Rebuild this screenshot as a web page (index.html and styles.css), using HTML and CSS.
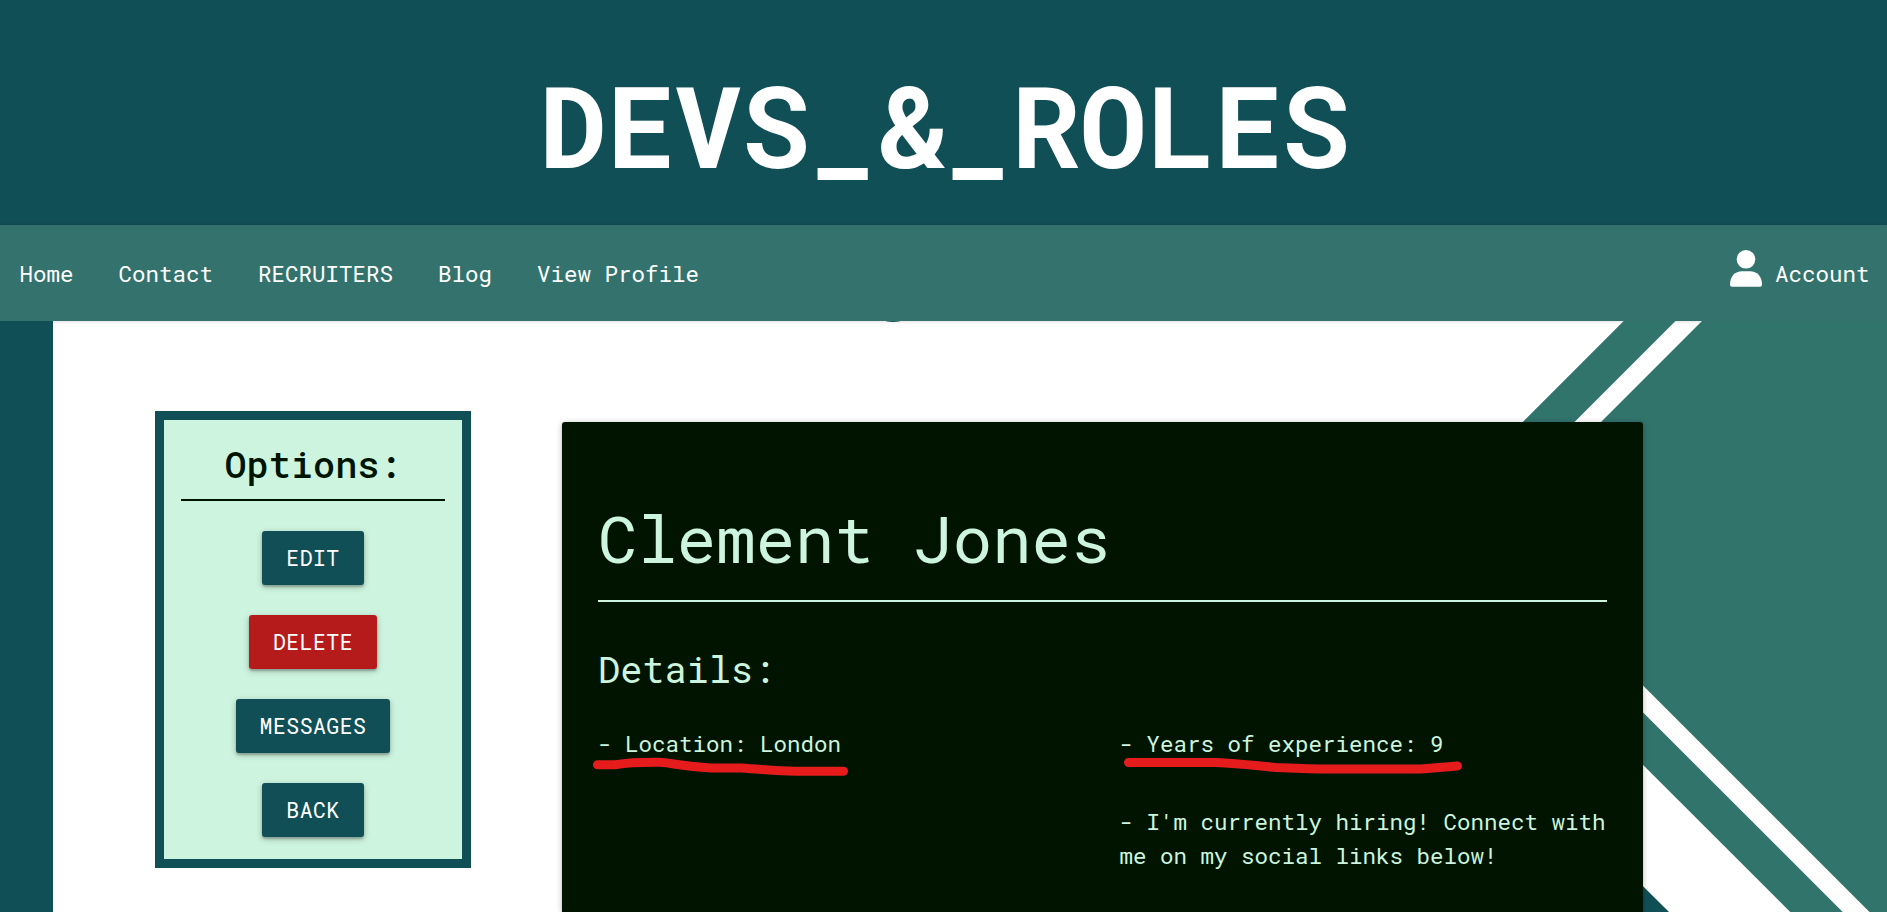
FILE: index.html
```html
<!DOCTYPE html>
<html lang="en">
<head>
<meta charset="utf-8">
<title>Devs & Roles</title>
<link rel="stylesheet" href="styles.css">
</head>
<body>
<header class="banner"><h1 class="brand">DEVS_&amp;_ROLES</h1></header>
<nav class="nav">
  <div class="links"><a>Home</a><a>Contact</a><a>RECRUITERS</a><a>Blog</a><a>View Profile</a></div>
  <div class="account">
    <svg class="user" width="32" height="37" viewBox="0 0 32 37"><circle cx="16" cy="9.3" r="9.3"/><path d="M0 34.5C0 26.500 5 21.300 12 21.300H20C27 21.300 32 26.500 32 34.500Q32 36.700 30 36.700H2Q0 36.700 0 34.500Z"/></svg>
    <span>Account</span>
  </div>
</nav>
<main class="page">
  <svg class="backdrop" viewBox="0 321 1887 591" preserveAspectRatio="none">
    <rect class="dark" y="321" width="53" height="591"/>
    <path class="green" d="M1623.700 321H1675.500L1480 516.500V464.700ZM1702 321H1887V912H1869.500L1540 582.500V483ZM1540 609.500 1842.700 912H1790.200L1540 662Z"/>
    <path class="dark" d="M1540 784V912H1669Z"/>
    <ellipse class="dark" cx="893" cy="320.500" rx="8" ry="1.500"/>
  </svg>
  <aside class="options">
    <h2 class="options-title">Options:</h2>
    <button class="btn">EDIT</button>
    <button class="btn danger">DELETE</button>
    <button class="btn">MESSAGES</button>
    <button class="btn">BACK</button>
  </aside>
  <section class="card">
    <h2 class="name">Clement Jones</h2>
    <h3 class="details">Details:</h3>
    <div class="columns">
      <div><p>- Location: London</p></div>
      <div><p>- Years of experience: 9</p><p>- I'm currently hiring! Connect with me on my social links below!</p></div>
    </div>
    <svg class="marks" width="880" height="40" viewBox="593 750 880 40">
      <path d="M597.500 764.700H615C633 762 645 762.300 659 762.300C674 763 679 766 711 768H741C770 770 780 771.200 795 771.200H843.500"/>
      <path d="M1128.500 762.500H1216C1240 763.500 1254 765.500 1276 767.500C1300 768.500 1310 769 1330 769H1421L1457.500 766"/>
    </svg>
  </section>
</main>
</body>
</html>
```
FILE: styles.css
```css
* { box-sizing: border-box; }
body { margin: 0; height: 912px; overflow: hidden; display: flex; flex-direction: column; font-family: "Roboto Mono", "DejaVu Sans Mono", monospace; font-size: 22.5px; background: #fff; }
h1, h2, h3, p { margin: 0; font-weight: 400; }
.banner { flex: none; height: 225px; background: #114f56; display: flex; justify-content: center; padding: 49px 0 0 2px; }
.brand { font-size: 112.5px; line-height: 150px; font-weight: 700; color: #fff; }
.nav { flex: none; height: 96px; background: #34736d; color: #fff; display: flex; justify-content: space-between; padding: 0 17.5px 0 19.5px; line-height: 96px; box-shadow: 0 0 4px rgba(0,0,0,.2); }
.links { display: flex; gap: 45px; }
.account { display: flex; gap: 12.5px; }
.user { margin-top: 25px; fill: #fff; }
.page { position: relative; flex: 1; min-height: 0; display: flex; align-items: flex-start; padding-left: 155px; gap: 91px; }
.backdrop { position: absolute; inset: 0; width: 100%; height: 100%; }
.dark { fill: #114f56; }
.green { fill: #31746c; }
.options { position: relative; margin-top: 90px; width: 316px; height: 457px; border: 9px solid #114f56; background: #cdf4de; padding: 21px 17px 0; display: flex; flex-direction: column; align-items: center; gap: 30px; color: #001400; }
.options-title { align-self: stretch; height: 60px; line-height: 46px; border-bottom: 2px solid #001400; text-align: center; font-size: 36.900px; font-weight: 500; }
.btn { height: 54px; border: 0; border-radius: 3px; padding: 0 24px; background: #114f56; color: #fff; font: 21.450px/54px "Roboto Mono", "DejaVu Sans Mono", monospace; letter-spacing: .5px; box-shadow: 0 2px 2px rgba(0,0,0,.2), 0 2px 6px rgba(0,0,0,.25); }
.danger { background: #b61b1c; }
.card { position: relative; align-self: stretch; margin-top: 101px; width: 1081px; border-radius: 3px 3px 0 0; background: #001400; color: #cdf4de; padding: 70px 36px 0; box-shadow: 0 2px 2px rgba(0,0,0,.14), 0 1px 6px rgba(0,0,0,.25); }
.name { height: 110px; font-size: 65.700px; line-height: 92px; border-bottom: 2px solid #cdf4de; }
.details { margin-top: 42px; font-size: 36.900px; line-height: 50px; }
.columns { margin-top: 32px; display: grid; grid-template-columns: 521.5px 487.5px; line-height: 34px; }
.columns p + p { margin-top: 44px; }
.marks { position: absolute; left: 31px; top: 328px; fill: none; stroke: #e61c1c; stroke-width: 9; stroke-linecap: round; stroke-linejoin: round; }
```
